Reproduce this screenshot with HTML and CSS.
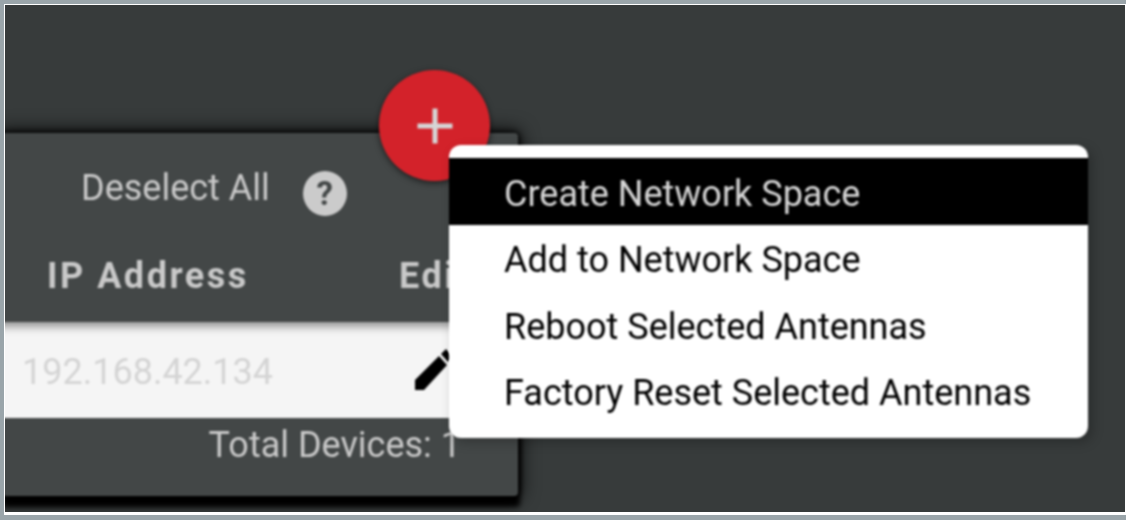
FILE: index.html
```html
<!DOCTYPE html>
<html lang="en">
<head>
    <meta charset="UTF-8">
    <title>Network Spaces</title>
    <link rel="stylesheet" href="styles.css">
</head>
<body>
    <div class="frame">
        <main class="screen">
            <section class="panel">
                <button class="fab" aria-label="Add">
                    <svg width="38" height="38" viewBox="0 0 38 38"><path d="M19 1.500V36.500M1.500 19H36.500" stroke="#d6d6d6" stroke-width="5" fill="none"/></svg>
                </button>

                <div class="select-row">
                    <span class="select-label">Deselect All</span>
                    <span class="help">?</span>
                </div>

                <div class="table-head">
                    <span class="col-ip">IP Address</span>
                    <span class="col-edit">Edit</span>
                </div>

                <div class="table-row">
                    <span class="col-ip">192.168.42.134</span>
                    <span class="col-edit">
                        <svg class="pencil" width="40" height="44" viewBox="0 0 40 44"><path d="M0 42V32L24 8L32 17L9 42Z" fill="#000"/><path d="M26 6L31 1L38 9L33 14Z" fill="#000"/></svg>
                    </span>
                </div>

                <div class="panel-foot">Total Devices: 1</div>
            </section>

            <!-- Context menu sits over the panel -->
            <ul class="menu">
                <li class="menu-item active">Create Network Space</li>
                <li class="menu-item">Add to Network Space</li>
                <li class="menu-item">Reboot Selected Antennas</li>
                <li class="menu-item">Factory Reset Selected Antennas</li>
            </ul>
        </main>
    </div>
</body>
</html>
```

FILE: styles.css
```css
html, body {
    margin: 0;
    padding: 0;
}

body {
    width: 1126px;
    height: 520px;
    overflow: hidden;
    background-color: #9aa5aa;
    font-family: 'Roboto', sans-serif;
}

.frame {
    box-sizing: border-box;
    width: 1122px;
    height: 511px;
    margin: 4px 0 0 4px;
    background-color: #fff;
    padding: 1px 1px 3px 1px;
}

.screen {
    position: relative;
    box-sizing: border-box;
    height: 507px;
    padding-top: 128px;
    overflow: hidden;
    background-color: #373b3b;
}

/* source shot is upscaled and soft */
.panel, .menu {
    filter: blur(0.8px);
}

.panel {
    position: relative;
    box-sizing: border-box;
    width: 517px;
    height: 363px;
    margin-left: -4px;
    background-color: #434747;
    border-radius: 0 4px 4px 0;
    box-shadow: 0 0 6px 1px #000, 0 0 18px 3px rgba(0, 0, 0, 0.8), 2px 11px 5px #000;
    color: #c9c9c9;
}

.fab {
    position: absolute;
    left: 378px;
    top: -63px;
    display: flex;
    align-items: center;
    justify-content: center;
    width: 111px;
    height: 111px;
    padding: 0;
    border: none;
    border-radius: 50%;
    background-color: #d3222a;
    box-shadow: 0 2px 6px rgba(0, 0, 0, 0.6);
}

.select-row {
    display: flex;
    align-items: center;
    height: 108px;
    padding: 2px 0 0 80px;
    box-sizing: border-box;
}

.select-label {
    font-size: 36px;
}

.help {
    display: flex;
    align-items: center;
    justify-content: center;
    width: 44px;
    height: 45px;
    margin: 10px 0 0 33px;
    border-radius: 50%;
    background-color: #cbcbcb;
    color: #434747;
    font-size: 33px;
    font-weight: 700;
}

.table-head {
    display: flex;
    align-items: center;
    height: 81px;
    padding: 0 0 11px 46px;
    box-sizing: border-box;
    font-size: 36px;
    font-weight: 700;
    letter-spacing: 2.500px;
}

.table-head .col-ip {
    width: 352px;
}

.table-row {
    display: flex;
    align-items: center;
    height: 96px;
    padding: 3px 0 0 21px;
    box-sizing: border-box;
    background-color: #f5f5f5;
    box-shadow: inset 0 12px 10px -8px rgba(0, 0, 0, 0.45);
    color: #d4d4d4;
    font-size: 36px;
}

.table-row .col-ip {
    width: 393px;
}

.col-edit {
    display: flex;
}

.pencil {
    display: block;
    margin-top: -3px;
}

.panel-foot {
    padding: 6px 57px 0 0;
    text-align: right;
    font-size: 36px;
}

.menu {
    position: absolute;
    left: 444px;
    top: 140px;
    width: 639px;
    height: 293px;
    margin: 0;
    padding: 13px 0 0 0;
    box-sizing: border-box;
    list-style: none;
    background-color: #fff;
    border-radius: 12px;
    box-shadow: 4px 4px 12px rgba(0, 0, 0, 0.25);
    color: #000;
    font-size: 36px;
}

.menu-item {
    display: flex;
    align-items: center;
    height: 66.500px;
    padding: 5px 0 0 55px;
    box-sizing: border-box;
}

.menu-item.active {
    background-color: #000;
    color: #d6d6d6;
}
```
